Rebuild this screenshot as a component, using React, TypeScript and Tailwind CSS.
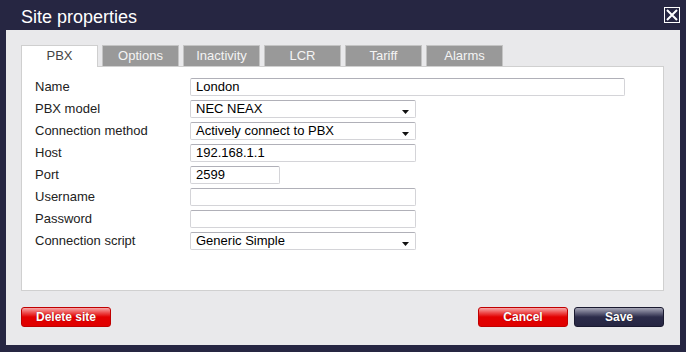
import React from "react";

const font = { fontFamily: '"Liberation Sans", Arial, sans-serif' };

function Arrow() {
  return (
    <svg width="7" height="4" viewBox="0 0 7 4" className="absolute right-[6px] top-[9px]">
      <polygon points="0,0 7,0 3.5,4" fill="#111" />
    </svg>
  );
}

function Field({ label, value, width, select }: { label: string; value?: string; width: string; select?: boolean }) {
  return (
    <div className="flex items-center h-[18px]">
      <div className="w-[155px] text-[13px] text-[#222] leading-[18px]">{label}</div>
      <div
        className={`relative h-[18px] ${width} bg-white border border-[#d4d4d8] border-t-[#b0b0b8] rounded-[2px] pl-[5px] text-[13px] leading-[16px] text-black`}
      >
        {value}
        {select && <Arrow />}
      </div>
    </div>
  );
}

const tabs = ["PBX", "Options", "Inactivity", "LCR", "Tariff", "Alarms"];

export default function App() {
  return (
    <div className="w-[686px] h-[352px] bg-[#262642] flex flex-col" style={font}>
      <div className="h-[30px] flex items-start justify-between pl-[21px] pr-[6px]">
        <div className="pt-[7px] text-[18px] leading-[21px] text-white">Site properties</div>
        <div className="mt-[7px] w-[16px] h-[16px] border border-white flex items-center justify-center">
          <svg width="14" height="14" viewBox="0 0 14 14">
            <path d="M2 2 L12 12 M12 2 L2 12" stroke="white" strokeWidth="2" />
          </svg>
        </div>
      </div>
      <div className="mx-[6px] h-[315px] bg-[#e9e9eb] pt-[15px] pl-[15px] pr-[16px] flex flex-col">
        <div className="flex gap-[4px] h-[21px] relative z-10">
          {tabs.map((t, i) => (
            <div
              key={t}
              className={
                i === 0
                  ? "w-[77px] h-[22px] bg-white border border-b-0 border-[#cfcfcf] text-[#444] text-[13px] flex items-center justify-center pb-[1px]"
                  : "w-[77px] h-[21px] bg-[#999999] border border-b-0 border-[#c4c4c4] text-[#f4f4f4] text-[13px] flex items-center justify-center"
              }
            >
              {t}
            </div>
          ))}
        </div>
        <div className="h-[225px] bg-white border border-[#d0d0d0] pt-[11px] pl-[13px] flex flex-col gap-[4px]">
          <Field label="Name" value="London" width="w-[435px]" />
          <Field label="PBX model" value="NEC NEAX" width="w-[226px]" select />
          <Field label="Connection method" value="Actively connect to PBX" width="w-[226px]" select />
          <Field label="Host" value="192.168.1.1" width="w-[226px]" />
          <Field label="Port" value="2599" width="w-[90px]" />
          <Field label="Username" width="w-[226px]" />
          <Field label="Password" width="w-[226px]" />
          <Field label="Connection script" value="Generic Simple" width="w-[226px]" select />
        </div>
        <div className="mt-[16px] flex justify-between">
          <button className="w-[90px] h-[20px] rounded-[3px] border border-[#c00000] bg-[linear-gradient(to_bottom,#f7a9a9_0%,#ee5050_25%,#e20000_50%,#e00000_100%)] text-white text-[12px] font-bold leading-[18px] [text-shadow:0_0_1px_rgba(80,0,0,0.6)]">
            Delete site
          </button>
          <div className="flex gap-[6px]">
            <button className="w-[90px] h-[20px] rounded-[3px] border border-[#c00000] bg-[linear-gradient(to_bottom,#f7a9a9_0%,#ee5050_25%,#e20000_50%,#e00000_100%)] text-white text-[12px] font-bold leading-[18px] [text-shadow:0_0_1px_rgba(80,0,0,0.6)]">
              Cancel
            </button>
            <button className="w-[90px] h-[20px] rounded-[3px] border border-[#1a1a30] bg-[linear-gradient(to_bottom,#a8a8b8_0%,#6a6a82_25%,#2c2c4a_50%,#262642_100%)] text-white text-[12px] font-bold leading-[18px] [text-shadow:0_0_1px_rgba(0,0,0,0.6)]">
              Save
            </button>
          </div>
        </div>
      </div>
    </div>
  );
}
